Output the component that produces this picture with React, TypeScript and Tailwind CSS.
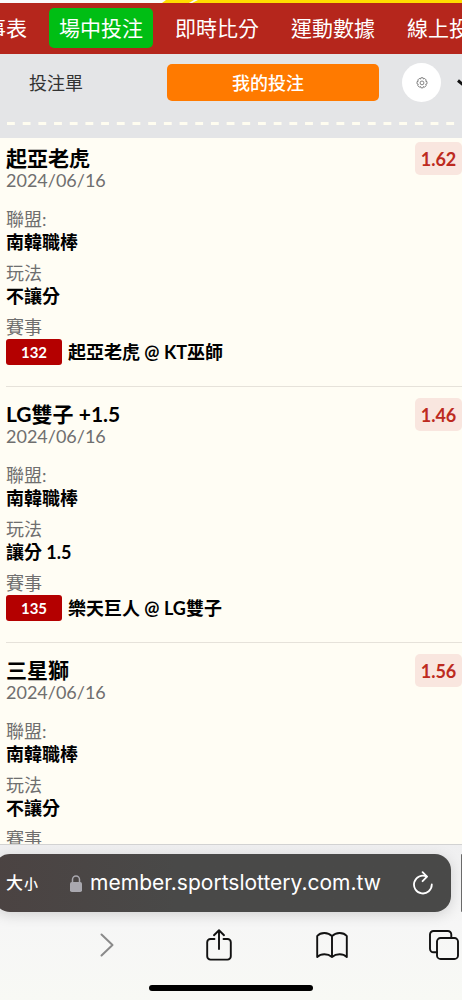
const NAV_ITEMS = ["賽事表", "場中投注", "即時比分", "運動數據", "線上投注"];
const ACTIVE_NAV = "場中投注";

interface Bet {
  pick:   string;
  odds:   string;
  date:   string;
  league: string;
  play:   string;
  game?:  { no: string; away: string; home: string };
}

const BETS: Bet[] = [
  {
    pick: "起亞老虎", odds: "1.62", date: "2024/06/16", league: "南韓職棒", play: "不讓分",
    game: { no: "132", away: "起亞老虎", home: "KT巫師" },
  },
  {
    pick: "LG雙子 +1.5", odds: "1.46", date: "2024/06/16", league: "南韓職棒", play: "讓分 1.5",
    game: { no: "135", away: "樂天巨人", home: "LG雙子" },
  },
  { pick: "三星獅", odds: "1.56", date: "2024/06/16", league: "南韓職棒", play: "不讓分" },
];

export default function App() {
  return (
    <div className="flex h-screen flex-col overflow-hidden bg-[#fffdf4] font-['Lato','Noto_Sans_CJK_TC',sans-serif]">
      <BannerEdge />
      <MainNav />
      <BetTabs />
      <main className="min-h-0 flex-1 overflow-hidden pt-1 pl-1.5">
        {BETS.map((bet) => (
          <BetEntry key={bet.pick} bet={bet} />
        ))}
      </main>
      <BrowserBar />
    </div>
  );
}

// ── Header ────────────────────────────────────────────────────────────────────

function BannerEdge() {
  return (
    <svg className="block h-[3px] w-full shrink-0 bg-[#fafafa]" aria-hidden="true">
      <path d="M166 0H194L189 3H162Z" fill="#ffdc00" />
      <path d="M198 0H2000V3H192Z" fill="#ffdc00" />
    </svg>
  );
}

function MainNav() {
  return (
    <nav className="shrink-0 overflow-hidden bg-[#b5261c] pt-[5px] pb-1.5">
      <div className="-ml-[46px] flex gap-3">
        {NAV_ITEMS.map((item) => (
          <a
            key={item}
            href="#"
            className={`flex h-10 shrink-0 items-center rounded-[5px] px-2.5 pb-0.5 text-[21px] leading-none text-white ${
              item === ACTIVE_NAV ? "bg-[#00be14]" : ""
            }`}
          >
            {item}
          </a>
        ))}
      </div>
    </nav>
  );
}

function BetTabs() {
  return (
    <div className="shrink-0 overflow-hidden bg-[#e4e5e7] pt-[9px] pb-[13px]">
      <div className="flex h-[39px] items-center text-lg">
        <button type="button" className="w-28 shrink-0 text-[#333]">投注單</button>
        <button type="button" className="ml-[55px] h-[37px] flex-1 rounded-[5px] bg-[#ff7a00] pr-2.5 font-medium text-white">
          我的投注
        </button>
        <button
          type="button"
          aria-label="設定"
          className="ml-[23px] flex size-[39px] shrink-0 items-center justify-center rounded-full bg-white"
        >
          <GearIcon />
        </button>
        <button type="button" aria-label="展開" className="ml-4 w-[5px] shrink-0 overflow-hidden">
          <svg width="14" height="8" viewBox="0 0 14 8" fill="none" stroke="#111" strokeWidth="3">
            <path d="M1 1.5L7 6.5L13 1.5" />
          </svg>
        </button>
      </div>
      {/* Perforated ticket edge */}
      <div className="mt-5 ml-[7px] h-[3px] bg-[linear-gradient(90deg,#fffdf0_50%,transparent_50%)] bg-[length:calc(100%/29)_3px]" />
    </div>
  );
}

function GearIcon() {
  return (
    <svg width="12" height="12" viewBox="0 0 24 24" fill="none" stroke="#666" strokeWidth="1.6" strokeLinejoin="round" aria-hidden="true">
      <path d="M9.8 1.5h4.4l.8 2.6 2.4-1.2 3.100 3.100-1.200 2.400 2.700.9v4.400l-2.700.9 1.200 2.500-3.100 3.100-2.400-1.200-.8 2.700H9.800l-.8-2.700-2.500 1.200-3.100-3.100 1.200-2.500-2.600-.9V9.300l2.600-.9L3.400 6l3.100-3.100L9 4.100z" />
      <circle cx="12" cy="11.800" r="3.800" />
    </svg>
  );
}

// ── BetEntry ──────────────────────────────────────────────────────────────────

function BetEntry({ bet }: { bet: Bet }) {
  return (
    <article className="mb-[11px] border-b border-[#e6e2da] pb-[21px] text-lg text-black">
      <div className="flex items-start justify-between">
        <div className="pt-1">
          <h2 className="text-[21px] leading-6 font-bold">{bet.pick}</h2>
          <time className="block leading-5 text-[#6f6f6f]">{bet.date}</time>
        </div>
        <span className="flex h-[33px] w-[47px] items-center justify-center rounded-[5px] bg-[#f9e6df] font-bold text-[#bd2a20]">
          {bet.odds}
        </span>
      </div>
      <dl className="mt-[18px] flex flex-col gap-2 leading-[23px]">
        <div>
          <dt className="text-[#6f6f6f]">聯盟:</dt>
          <dd className="font-bold">{bet.league}</dd>
        </div>
        <div>
          <dt className="text-[#6f6f6f]">玩法</dt>
          <dd className="font-bold">{bet.play}</dd>
        </div>
        <div>
          <dt className="text-[#6f6f6f]">賽事</dt>
          {bet.game && (
            <dd className="flex items-center gap-1.5 font-bold">
              <span className="flex h-[26px] w-14 items-center justify-center rounded-[3px] bg-[#b40000] text-[15px] text-white">
                {bet.game.no}
              </span>
              <span>
                {bet.game.away} @ {bet.game.home}
              </span>
            </dd>
          )}
        </div>
      </dl>
    </article>
  );
}

// ── Browser chrome ────────────────────────────────────────────────────────────

function BrowserBar() {
  return (
    <footer className="shrink-0 overflow-hidden border-t border-[#d2d2d2] bg-linear-to-b from-[#efeff0] via-[#f6f6f6] to-[#f8f9f5] py-[9px]">
      <div className="-ml-1.5 flex gap-[10px]">
        <div className="flex h-[58px] flex-1 items-center rounded-2xl bg-linear-to-r from-[#4b4342] to-[#494948] to-40% pr-[18px] pl-3 text-white shadow-[0_3px_14px_rgba(0,0,0,0.14)]">
          <button type="button" className="flex shrink-0 items-baseline gap-px text-[17px] font-medium">
            大<span className="text-sm">小</span>
          </button>
          <div className="flex min-w-0 flex-1 items-center justify-center gap-2">
            <LockIcon />
            <span className="font-['Inter','Liberation_Sans',sans-serif] text-[21px] leading-7">
              member.sportslottery.com.tw
            </span>
          </div>
          <button type="button" aria-label="重新載入" className="shrink-0">
            <svg width="20" height="24" viewBox="0 0 20 24" fill="none" stroke="currentColor" strokeWidth="1.8" strokeLinecap="round" strokeLinejoin="round">
              <path d="M18.8 13.500A8.900 8.900 0 1 1 13.600 5.500" />
              <path d="M9.600 1.200L14 5.700L9.600 10.200" />
            </svg>
          </button>
        </div>
        <div className="h-[58px] w-px shrink-0 rounded-l-2xl bg-[#6a6a6a]" />
      </div>

      <div className="mt-[17px] flex items-center justify-between pr-0.5 pl-[91px] text-[#111]">
        <button type="button" aria-label="下一頁" className="flex size-8 items-center justify-center text-[#8a8a8a]">
          <svg width="14" height="24" viewBox="0 0 14 24" fill="none" stroke="currentColor" strokeWidth="2" strokeLinecap="round" strokeLinejoin="round">
            <path d="M1.5 1.5L12.5 12L1.5 22.5" />
          </svg>
        </button>
        <button type="button" aria-label="分享" className="flex size-8 items-center justify-center">
          <svg width="26" height="32" viewBox="0 0 26 32" fill="none" stroke="currentColor" strokeWidth="1.9" strokeLinecap="round" strokeLinejoin="round">
            <path d="M8.5 10H4.5a3.3 3.3 0 0 0-3.3 3.3v14a3.3 3.3 0 0 0 3.3 3.3h17a3.3 3.3 0 0 0 3.3-3.3v-14a3.3 3.3 0 0 0-3.3-3.3h-4" />
            <path d="M13 20V1.5M8 6.2L13 1.3L18 6.2" />
          </svg>
        </button>
        <button type="button" aria-label="書籤" className="flex size-8 items-center justify-center">
          <svg width="32" height="26" viewBox="0 0 32 26" fill="none" stroke="currentColor" strokeWidth="1.9" strokeLinecap="round" strokeLinejoin="round">
            <path d="M16 4.2C13.8 1.8 11.3 1 8.4 1S3 1.8 1.2 4v21c2-1.9 4.5-2.7 7.2-2.7s5.5.9 7.6 2.7c2.1-1.8 4.9-2.7 7.6-2.7s5.2.8 7.2 2.7V4C29 1.8 26.5 1 23.6 1S18.2 1.8 16 4.2V25" />
          </svg>
        </button>
        <button type="button" aria-label="分頁" className="flex size-8 items-center justify-center">
          <svg width="30" height="30" viewBox="0 0 30 30" fill="none" stroke="currentColor" strokeWidth="1.9" strokeLinecap="round" strokeLinejoin="round">
            <rect x="8" y="8" width="21" height="21" rx="3.6" />
            <path d="M8 22.3H4.5A3.5 3.5 0 0 1 1 18.8V4.5A3.5 3.5 0 0 1 4.5 1H18.8A3.5 3.5 0 0 1 22.3 4.5V8" />
          </svg>
        </button>
      </div>

      <div className="mx-auto mt-6 h-1.5 w-[164px] rounded-full bg-black" />
    </footer>
  );
}

function LockIcon() {
  return (
    <svg width="12" height="17" viewBox="0 0 12 17" className="shrink-0 text-[#a9a8af]" aria-hidden="true">
      <path d="M2.5 8V4.5a3.5 3.5 0 0 1 7 0V8" fill="none" stroke="currentColor" strokeWidth="1.5" />
      <rect x="0" y="7" width="12" height="10" rx="1.8" fill="currentColor" />
    </svg>
  );
}
